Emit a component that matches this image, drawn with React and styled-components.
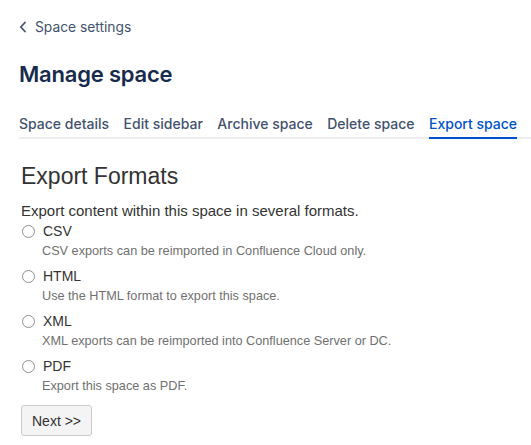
import React, { useState } from 'react'
import styled, { createGlobalStyle } from 'styled-components'

const GlobalStyle = createGlobalStyle`
    body {
        margin: 0;
        background: #ffffff;
        font-family: Inter, "Noto Sans", sans-serif;
    }
`

const Page = styled.div`
    padding: 17px 0 0 19px;
`

const BackLink = styled.a`
    display: flex;
    align-items: center;
    gap: 8px;
    font-size: 13.8px;
    line-height: 20px;
    color: #42526e;
    text-decoration: none;
    cursor: pointer;
`

const Title = styled.h1`
    margin: 23px 0 0;
    font-size: 22px;
    line-height: 28px;
    font-weight: 600;
    color: #172b4d;
    letter-spacing: -0.2px;
`

const TabList = styled.div`
    display: flex;
    gap: 14.5px;
    margin-top: 26px;
    border-bottom: 2px solid #ebecf0;
`

const Tab = styled.div`
    position: relative;
    font-size: 14px;
    line-height: 20px;
    font-weight: 500;
    padding-bottom: 3px;
    color: ${p => (p.$active ? '#0052cc' : '#42526e')};
    cursor: pointer;

    &::after {
        content: '';
        display: ${p => (p.$active ? 'block' : 'none')};
        position: absolute;
        left: 0;
        right: 0;
        bottom: -2px;
        height: 2px;
        background: #0052cc;
    }
`

const Section = styled.div`
    padding-left: 2px;
    font-family: "Liberation Sans", Arial, sans-serif;
    color: #333333;
`

const SectionHeading = styled.h2`
    margin: 24px 0 0;
    font-size: 23px;
    line-height: 26px;
    font-weight: 400;
    color: #333333;
`

const Intro = styled.p`
    margin: 13px 0 2px;
    font-size: 15px;
    line-height: 18px;
`

const Option = styled.label`
    display: block;
    margin-bottom: 8px;
    cursor: pointer;
`

const OptionRow = styled.div`
    display: flex;
    align-items: center;
    gap: 8px;
    font-size: 14px;
    line-height: 18px;
`

const Radio = styled.input`
    appearance: none;
    width: 13px;
    height: 13px;
    margin: 0 0 0 1px;
    border: 1px solid #8f8f8f;
    border-radius: 50%;
    background: #fff;
    box-sizing: border-box;

    &:checked {
        border: 4px solid #0069d9;
    }
`

const Description = styled.div`
    margin: 3px 0 0 21px;
    font-size: 12.7px;
    line-height: 16px;
    color: #707070;
`

const Button = styled.button`
    margin-top: 3px;
    height: 31px;
    padding: 0 10px;
    font-family: "Liberation Sans", Arial, sans-serif;
    font-size: 14px;
    color: #333333;
    background: #f4f4f4;
    border: 1px solid #cccccc;
    border-radius: 3px;
    cursor: pointer;
`

const ChevronLeft = () => (
    <svg width="8" height="12" viewBox="0 0 8 12" fill="none">
        <path d="M6 1.5L1.8 6L6 10.5" stroke="#42526e" strokeWidth="1.8" strokeLinecap="round" strokeLinejoin="round" />
    </svg>
)

const tabs = ['Space details', 'Edit sidebar', 'Archive space', 'Delete space', 'Export space']

const formats = [
    { id: 'csv', label: 'CSV', text: 'CSV exports can be reimported in Confluence Cloud only.' },
    { id: 'html', label: 'HTML', text: 'Use the HTML format to export this space.' },
    { id: 'xml', label: 'XML', text: 'XML exports can be reimported into Confluence Server or DC.' },
    { id: 'pdf', label: 'PDF', text: 'Export this space as PDF.' },
]

const App = () => {
    const [format, setFormat] = useState(null)

    return (
        <>
            <GlobalStyle />
            <Page>
                <BackLink>
                    <ChevronLeft />
                    Space settings
                </BackLink>
                <Title>Manage space</Title>
                <TabList>
                    {tabs.map(t => (
                        <Tab key={t} $active={t === 'Export space'}>{t}</Tab>
                    ))}
                </TabList>
                <Section>
                    <SectionHeading>Export Formats</SectionHeading>
                    <Intro>Export content within this space in several formats.</Intro>
                    {formats.map(f => (
                        <Option key={f.id}>
                            <OptionRow>
                                <Radio
                                    type="radio"
                                    name="format"
                                    checked={format === f.id}
                                    onChange={() => setFormat(f.id)}
                                />
                                {f.label}
                            </OptionRow>
                            <Description>{f.text}</Description>
                        </Option>
                    ))}
                    <Button>Next &gt;&gt;</Button>
                </Section>
            </Page>
        </>
    )
}

export default App
